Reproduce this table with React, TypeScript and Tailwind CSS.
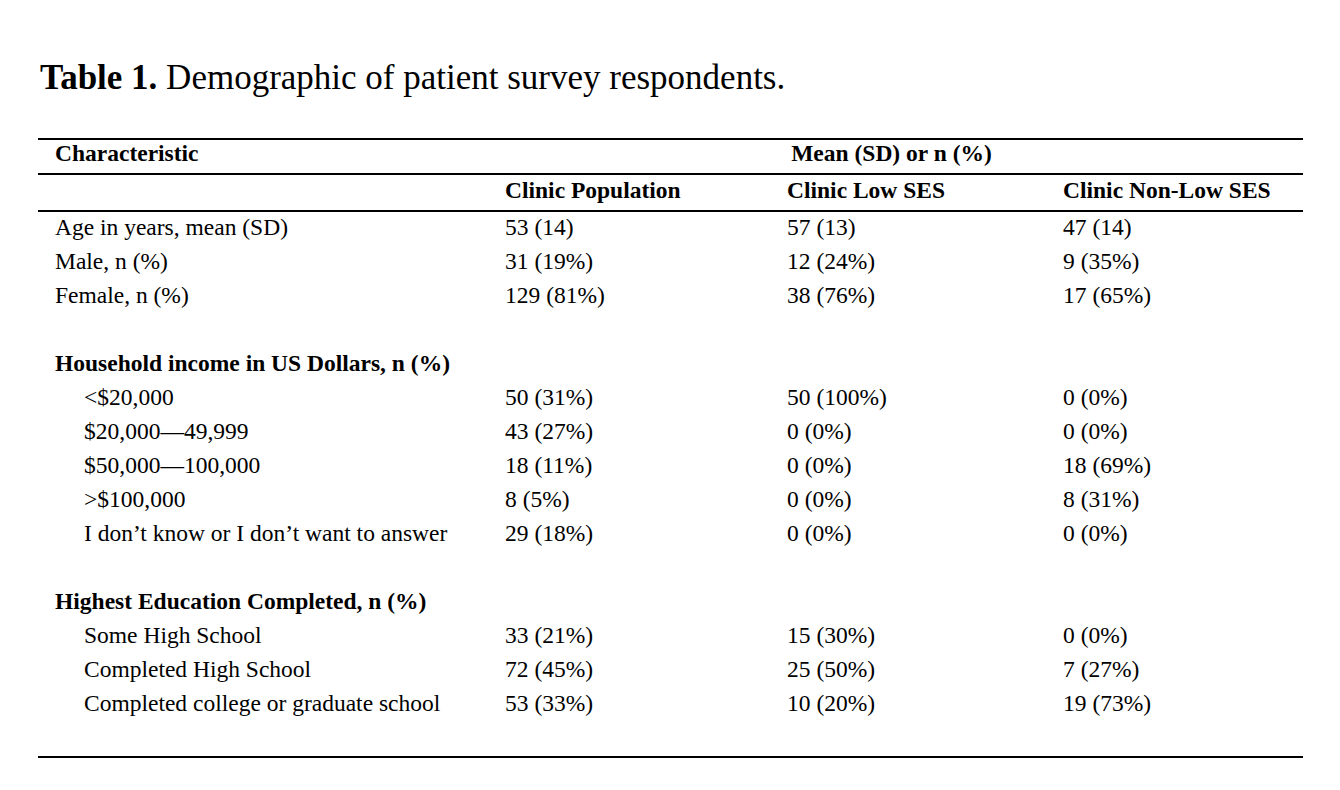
const rows: { label: string; vals?: string[]; kind: "data" | "sub" | "head" | "blank" }[] = [
  { label: "Age in years, mean (SD)", vals: ["53 (14)", "57 (13)", "47 (14)"], kind: "data" },
  { label: "Male, n (%)", vals: ["31 (19%)", "12 (24%)", "9 (35%)"], kind: "data" },
  { label: "Female, n (%)", vals: ["129 (81%)", "38 (76%)", "17 (65%)"], kind: "data" },
  { label: "", kind: "blank" },
  { label: "Household income in US Dollars, n (%)", kind: "head" },
  { label: "<$20,000", vals: ["50 (31%)", "50 (100%)", "0 (0%)"], kind: "sub" },
  { label: "$20,000\u201449,999", vals: ["43 (27%)", "0 (0%)", "0 (0%)"], kind: "sub" },
  { label: "$50,000\u2014100,000", vals: ["18 (11%)", "0 (0%)", "18 (69%)"], kind: "sub" },
  { label: ">$100,000", vals: ["8 (5%)", "0 (0%)", "8 (31%)"], kind: "sub" },
  { label: "I don\u2019t know or I don\u2019t want to answer", vals: ["29 (18%)", "0 (0%)", "0 (0%)"], kind: "sub" },
  { label: "", kind: "blank" },
  { label: "Highest Education Completed, n (%)", kind: "head" },
  { label: "Some High School", vals: ["33 (21%)", "15 (30%)", "0 (0%)"], kind: "sub" },
  { label: "Completed High School", vals: ["72 (45%)", "25 (50%)", "7 (27%)"], kind: "sub" },
  { label: "Completed college or graduate school", vals: ["53 (33%)", "10 (20%)", "19 (73%)"], kind: "sub" },
  { label: "", kind: "blank" },
];

const cols = "grid grid-cols-[450px_282px_276px_257px]";

export default function App() {
  return (
    <div className="min-h-[790px] w-[1340px] bg-white px-[38px] pt-[58px] text-black font-['Liberation_Serif','Times_New_Roman',serif]">
      <h1 className="h-[40px] pl-[2px] text-[35px] leading-[40px]">
        <span className="font-bold">Table 1.</span> Demographic of patient survey respondents.
      </h1>

      <div className="mt-[40px] w-[1265px] border-y-2 border-black text-[23.5px]">
        <div className={`${cols} h-[33px] items-start font-bold leading-[27px]`}>
          <div className="pl-[17px]">Characteristic</div>
          <div className="col-span-3 pr-[8px] text-center">Mean (SD) or n (%)</div>
        </div>
        <div className={`${cols} h-[39px] items-start border-y-2 border-black font-bold leading-[31px]`}>
          <div />
          <div className="pl-[17px]">Clinic Population</div>
          <div className="pl-[17px]">Clinic Low SES</div>
          <div className="pl-[17px]">Clinic Non-Low SES</div>
        </div>

        {rows.map((r, i) => (
          <div key={i} className={`${cols} h-[34px] items-start leading-[30px]`}>
            <div
              className={
                r.kind === "sub"
                  ? "pl-[46px]"
                  : r.kind === "head"
                  ? "pl-[17px] font-bold"
                  : "pl-[17px]"
              }
            >
              {r.label}
            </div>
            {(r.vals ?? ["", "", ""]).map((v, j) => (
              <div key={j} className="pl-[17px]">
                {v}
              </div>
            ))}
          </div>
        ))}
      </div>
    </div>
  );
}
